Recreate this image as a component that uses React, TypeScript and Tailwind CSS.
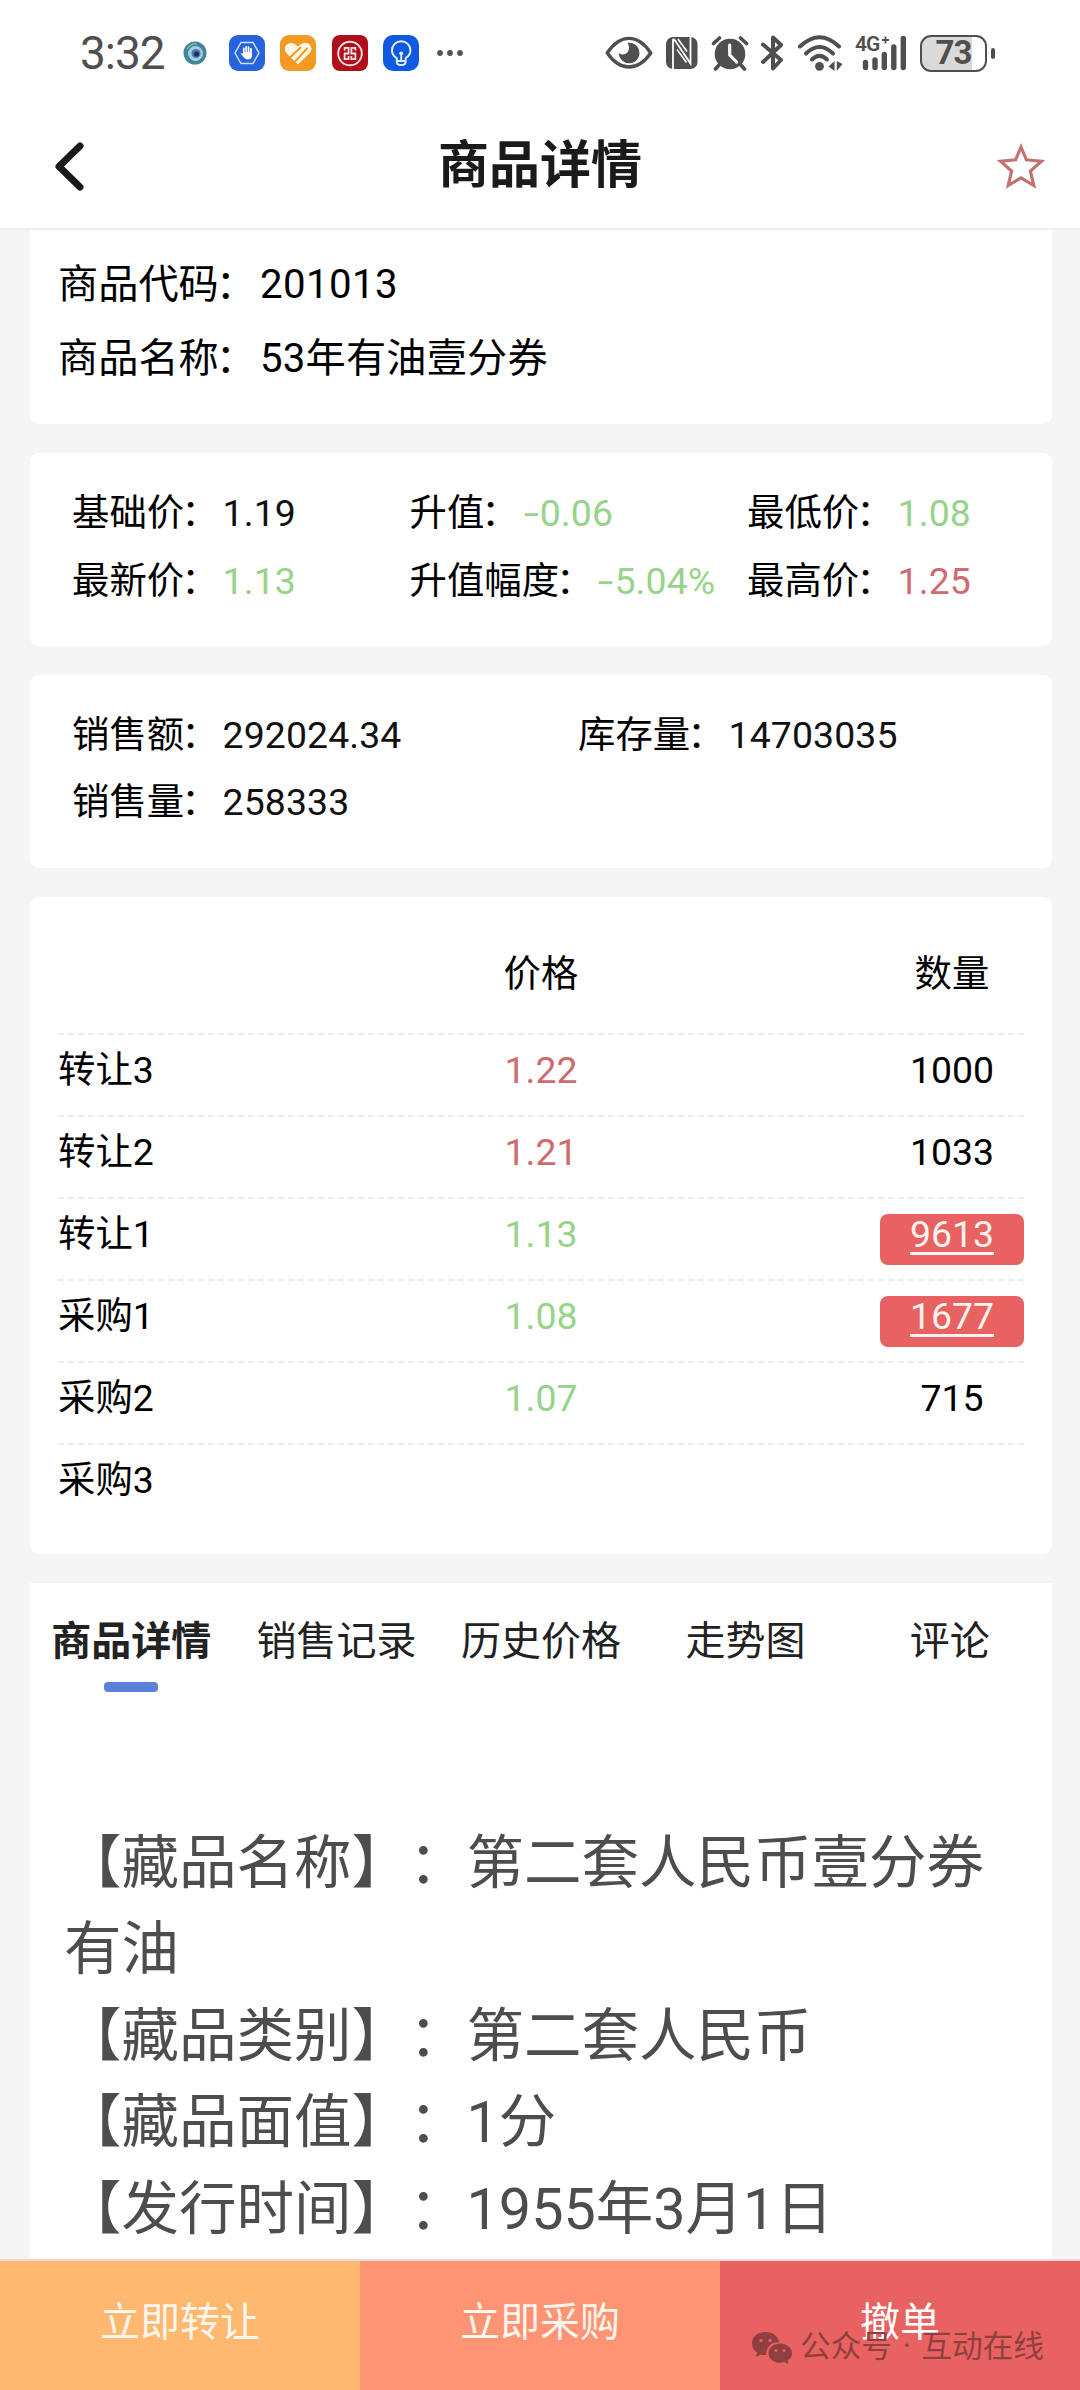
import React from 'react';
import clsx from 'clsx';

type Tone = 'up' | 'down' | 'plain';

const toneClass: Record<Tone, string> = {
  up: 'text-[#cf6b6f]',
  down: 'text-[#97d48a]',
  plain: 'text-[#111111]',
};

const prices: { label: string; value: string; tone: Tone }[] = [
  { label: '基础价', value: '1.19', tone: 'plain' },
  { label: '升值', value: '-0.06', tone: 'down' },
  { label: '最低价', value: '1.08', tone: 'down' },
  { label: '最新价', value: '1.13', tone: 'down' },
  { label: '升值幅度', value: '-5.04%', tone: 'down' },
  { label: '最高价', value: '1.25', tone: 'up' },
];

const sales = [
  { label: '销售额', value: '292024.34' },
  { label: '库存量', value: '14703035' },
  { label: '销售量', value: '258333' },
];

const orders: { name: string; price: string; tone: Tone; amount: string; mine?: boolean }[] = [
  { name: '转让3', price: '1.22', tone: 'up', amount: '1000' },
  { name: '转让2', price: '1.21', tone: 'up', amount: '1033' },
  { name: '转让1', price: '1.13', tone: 'down', amount: '9613', mine: true },
  { name: '采购1', price: '1.08', tone: 'down', amount: '1677', mine: true },
  { name: '采购2', price: '1.07', tone: 'down', amount: '715' },
  { name: '采购3', price: '', tone: 'plain', amount: '' },
];

const tabs = ['商品详情', '销售记录', '历史价格', '走势图', '评论'];

const details = [
  '【藏品名称】：第二套人民币壹分券有油',
  '【藏品类别】：第二套人民币',
  '【藏品面值】：1分',
  '【发行时间】：1955年3月1日',
];

const AppIcons: React.FC = () => (
  <div className="flex items-center">
    <svg className="ml-[19px] h-[24px] w-[24px]" viewBox="0 0 24 24">
      <circle cx="12" cy="12" r="11.5" fill="#3f8796" />
      <circle cx="12.5" cy="12.5" r="7.5" fill="#a9cbe6" />
      <circle cx="13" cy="12.5" r="4.6" fill="#4c78ae" />
      <circle cx="13.5" cy="13" r="2.6" fill="#1c3357" />
      <path d="M4 8 Q8 2 14 3" stroke="#8fb9ae" strokeWidth="1.2" fill="none" />
    </svg>
    <svg className="ml-[22px] h-[36px] w-[36px]" viewBox="0 0 36 36">
      <rect width="36" height="36" rx="9" fill="#2763dc" />
      <path d="M12 7.5H24L30 18L24 28.5H12L6 18Z" fill="none" stroke="#cfe3ff" strokeWidth="1.4" />
      <path
        d="M14.8 19V13.5M17.2 18V12M19.6 18V12.2M22 19V14"
        stroke="#fff"
        strokeWidth="1.8"
        strokeLinecap="round"
      />
      <path d="M14 17H23V21Q22.5 24.5 18.8 24.5Q16 24.5 14.2 21.8L11.8 18.5Q12 17.2 14 19Z" fill="#fff" />
    </svg>
    <svg className="ml-[15px] h-[36px] w-[36px]" viewBox="0 0 36 36">
      <rect width="36" height="36" rx="9" fill="#f49a24" />
      <path
        d="M18 29.5L6.5 18.2Q3 13.4 6.8 9.4Q11.6 5.6 18 11.4Q24.4 5.6 29.4 9.2Q33.4 13.4 29.6 18.2Z"
        fill="#fff7e6"
      />
      <path d="M20.5 12.5L10 22.5M27 13.5L15.2 26.4" stroke="#f49a24" strokeWidth="2" strokeLinecap="round" />
    </svg>
    <svg className="ml-[16px] h-[36px] w-[36px]" viewBox="0 0 36 36">
      <rect width="36" height="36" rx="8" fill="#b00e1c" />
      <circle cx="18" cy="18.5" r="11.8" fill="none" stroke="#fbe4e2" strokeWidth="1.9" />
      <path
        d="M11.8 12.8H16.6V18.5H11.8M12.6 18.5V24.2H16.6V21M24.2 12.8H19.4V18.5H24.2M23.4 18.5V24.2H19.4V21M12.6 15.6V12.8M23.4 15.6V12.8"
        fill="none"
        stroke="#fbe4e2"
        strokeWidth="1.8"
      />
    </svg>
    <svg className="ml-[15px] h-[36px] w-[36px]" viewBox="0 0 36 36">
      <rect width="36" height="36" rx="10" fill="#0f59e3" />
      <path
        d="M13.8 27V23.2Q9 20.2 9 15.4A9.2 9.2 0 0 1 27.4 15.4Q27.4 20.2 22.6 23.2V27Q22.6 30 18.2 30Q13.8 30 13.8 27ZM13.8 26H22.6"
        fill="none"
        stroke="#e3f1ff"
        strokeWidth="2"
      />
      <path d="M18.2 25V18.5" stroke="#e3f1ff" strokeWidth="1.8" />
      <circle cx="18.2" cy="18.3" r="1.9" fill="#e3f1ff" />
    </svg>
    <svg className="ml-[17px] h-[8px] w-[28px]" viewBox="0 0 28 8" fill="#555">
      <circle cx="4" cy="4" r="2.9" />
      <circle cx="14" cy="4" r="2.9" />
      <circle cx="24" cy="4" r="2.9" />
    </svg>
  </div>
);

const SystemIcons: React.FC = () => (
  <div className="flex items-center">
    <svg className="h-[34px] w-[48px]" viewBox="0 0 48 34">
      <path
        d="M2.2 17Q12 2.4 24 2.4T45.8 17Q36 31 24 31T2.2 17Z"
        fill="none"
        stroke="#4f4f4f"
        strokeWidth="3.4"
        strokeLinejoin="round"
      />
      <path d="M22.5 6.8A10.3 10.3 0 1 1 13.8 17Q18.5 20.3 22.4 16.6Q25.8 12 22.5 6.8Z" fill="#4f4f4f" />
    </svg>
    <svg className="ml-[12px] h-[34px] w-[34px]" viewBox="0 0 34 34">
      <rect x="1" y="1" width="31.5" height="32" rx="7" fill="#4f4f4f" />
      <path d="M8 33V4.5Q8 2 10 4.5L25.5 27.5V1" fill="none" stroke="#fff" strokeWidth="1.8" />
      <path d="M12 13.5L21.5 26.5M13 3L22 15.5" fill="none" stroke="#fff" strokeWidth="1.6" />
    </svg>
    <svg className="ml-[12px] h-[36px] w-[38px]" viewBox="0 0 38 36">
      <circle cx="19" cy="19" r="15.3" fill="#4f4f4f" />
      <path d="M2.5 8.5L8.5 3M35.5 8.5L29.5 3M8 30L4.5 34M30 30L33.5 34" stroke="#4f4f4f" strokeWidth="3.6" strokeLinecap="round" />
      <path d="M18.7 10V20L25.5 27" fill="none" stroke="#fff" strokeWidth="3.2" strokeLinecap="round" strokeLinejoin="round" />
    </svg>
    <svg className="ml-[12px] h-[36px] w-[24px]" viewBox="0 0 24 36">
      <path
        d="M2 9.5L20 25L12 33.5V2.5L20 10L2 27"
        fill="none"
        stroke="#4f4f4f"
        strokeWidth="4"
        strokeLinecap="round"
        strokeLinejoin="round"
      />
    </svg>
    <svg className="ml-[12px] h-[36px] w-[46px]" viewBox="0 0 46 36">
      <g fill="none" stroke="#4f4f4f" strokeWidth="4" strokeLinecap="round">
        <path d="M3 11.5Q22.5 -7 42 11.5" />
        <path d="M9 18.5Q22.5 5.5 36 18.5" />
        <path d="M15 24.5Q22.5 17.2 30 24.5" />
      </g>
      <circle cx="22.5" cy="31.3" r="4.4" fill="#4f4f4f" />
      <path d="M37.5 26V36L31.5 31.5ZM39.8 26V36L45.5 29Z" fill="#4f4f4f" />
    </svg>
    <div className="relative ml-[12px] h-[36px] w-[52px]">
      <span className="absolute -top-[1px] left-0 text-[21px] leading-[20px] font-semibold tracking-[-1px]">4G</span>
      <svg className="h-[36px] w-[52px]" viewBox="0 0 52 36">
        <path d="M30.5 1.5V8.5M27 5H34" stroke="#4f4f4f" strokeWidth="1.8" />
        <path d="M10.5 27.5V32.5M20 25V32.5M29.3 19.5V32.5M38.8 12V32.5M48.3 3.5V32.5" stroke="#4f4f4f" strokeWidth="5.4" strokeLinecap="round" />
      </svg>
    </div>
    <div className="ml-[13px] flex h-[37px] w-[67px] items-center justify-center rounded-[11px] border-[2.5px] border-[#4f4f4f] bg-linear-to-r from-[#dadada] from-80% to-white to-80%">
      <span className="text-[33px] leading-[32px] font-bold tracking-[-1px]">73</span>
    </div>
    <div className="ml-[4px] h-[11px] w-[4px] rounded-full bg-[#4f4f4f]" />
  </div>
);

const Card: React.FC<{ className?: string; children: React.ReactNode }> = ({ className, children }) => (
  <section className={clsx('mr-[28px] ml-[30px] bg-white', className)}>{children}</section>
);

// full-width colon, pulled a little towards its label
const Colon: React.FC = () => <span className="mr-[4px] -ml-[3px]">：</span>;

const Amount: React.FC<{ value: string; tone?: Tone }> = ({ value, tone = 'plain' }) => {
  const negative = value.startsWith('-');
  return (
    <span className={clsx('tracking-[0.1px]', toneClass[tone])}>
      {negative && <span className="inline-block w-[17px] scale-x-150 text-center">-</span>}
      {negative ? value.slice(1) : value}
    </span>
  );
};

const App: React.FC = () => {
  return (
    <div className="flex h-[2390px] w-[1080px] flex-col overflow-hidden bg-[#f5f5f5] font-[Roboto,'Noto_Sans_CJK_SC',sans-serif] text-black [text-spacing-trim:space-all]">
      <header className="h-[230px] shrink-0 border-b-2 border-[#eeeeee] bg-white">
        <div className="flex h-[106px] items-center justify-between pr-[85px] pl-[80px] text-[#4f4f4f]">
          <div className="flex items-center">
            <span className="w-[84px] text-[46px] leading-none tracking-[-1px]">3:32</span>
            <AppIcons />
          </div>
          <SystemIcons />
        </div>
        <div className="flex h-[120px] items-center justify-between pr-[35px] pl-[52px]">
          <svg className="h-[50px] w-[34px]" viewBox="0 0 34 50">
            <path d="M28 5L7 25.5L28 46" fill="none" stroke="#1a1a1a" strokeWidth="7" strokeLinecap="round" strokeLinejoin="round" />
          </svg>
          <h1 className="-ml-[3px] text-[51px] leading-[60px] font-bold text-[#1a1a1a]">商品详情</h1>
          <svg className="h-[46px] w-[48px]" viewBox="0 0 48 46">
            <path
              d="M24 4L29.4 16.8L44.5 18.2L33.4 28L36.8 42.5L24 34.8L11.2 42.5L14.6 28L3.5 18.2L18.6 16.8Z"
              fill="none"
              stroke="#c4726f"
              strokeWidth="3.2"
            />
          </svg>
        </div>
      </header>

      <main className="flex min-h-0 flex-1 flex-col gap-[29px] overflow-hidden">
        <Card className="h-[194px] shrink-0 rounded-b-[9px] px-[28px] pt-[18px] text-[40.2px] leading-[74px]">
          <p>
            商品代码
            <Colon />
            <span className="tracking-[0.4px]">201013</span>
          </p>
          <p>
            商品名称
            <Colon />
            <span className="tracking-[0.2px]">53年有油壹分券</span>
          </p>
        </Card>

        <Card className="h-[193px] shrink-0 rounded-[9px] px-[42px] pt-[26px] text-[37.4px] leading-[68px]">
          <div className="grid grid-cols-[337.5px_337.5px_1fr] whitespace-nowrap">
            {prices.map((item) => (
              <p key={item.label}>
                {item.label}
                <Colon />
                <Amount value={item.value} tone={item.tone} />
              </p>
            ))}
          </div>
        </Card>

        <Card className="h-[193px] shrink-0 rounded-[9px] px-[42px] pt-[27px] text-[37.4px] leading-[67px]">
          <div className="grid grid-cols-[506px_1fr]">
            {sales.map((item) => (
              <p key={item.label}>
                {item.label}
                <Colon />
                <Amount value={item.value} />
              </p>
            ))}
          </div>
        </Card>

        <Card className="h-[657px] shrink-0 rounded-[9px] px-[28px] text-[37.4px]">
          <div className="grid h-[136px] grid-cols-[411px_144px_411px] pt-[41px] leading-[72px]">
            <span className="col-start-2 text-center">价格</span>
            <span className="w-[144px] justify-self-end text-center">数量</span>
          </div>
          {orders.map((row) => (
            <div
              key={row.name}
              className="grid h-[82px] grid-cols-[411px_144px_411px] border-t-2 border-dashed border-[#ececec] leading-[70px]"
            >
              <span>{row.name}</span>
              <span className={clsx('text-center', toneClass[row.tone])}>{row.price}</span>
              <span
                className={clsx(
                  'w-[144px] justify-self-end text-center',
                  row.mine &&
                    'mt-[15px] h-[51px] rounded-[8px] bg-[#e96262] leading-[40px] text-[#fff3ee] underline decoration-[3px] underline-offset-[5px]',
                )}
              >
                {row.amount}
              </span>
            </div>
          ))}
        </Card>

        <Card className="flex-1">
          <nav className="grid grid-cols-5 pt-[29px] text-[40px] leading-[60px] text-[#222222]">
            {tabs.map((tab, i) => (
              <div key={tab} className="flex flex-col items-center">
                <span className={clsx('whitespace-nowrap', i === 0 && '-ml-[2px] font-bold')}>{tab}</span>
                {i === 0 && <i className="mt-[10px] -ml-[2px] h-[10px] w-[54px] rounded-[4px] bg-[#5a82dd]" />}
              </div>
            ))}
          </nav>
          <article className="mt-[129px] pr-[30px] pl-[34px] text-[57.5px] leading-[86.4px] text-[#4d4d4d]">
            {details.map((line) => (
              <p key={line}>{line}</p>
            ))}
          </article>
        </Card>
      </main>

      <footer className="relative grid h-[131px] shrink-0 grid-cols-3 border-t-2 border-[#efd9d0] text-center text-[40px] leading-[120px] text-[#fff6ee]">
        <button className="bg-[#ffb870] pb-[5px]">立即转让</button>
        <button className="bg-[#ff9474] pb-[5px]">立即采购</button>
        <button className="bg-[#e96262] pb-[5px] text-white">撤单</button>
        <div className="absolute top-[66px] left-[751px] flex items-center text-[30.7px] leading-[40px] whitespace-nowrap text-[#8f3f40] [word-spacing:3px]">
          <svg className="mt-[2px] mr-[7px] h-[34px] w-[42px]" viewBox="0 0 42 34">
            <path
              d="M14.5 1C6.5 1 1 6 1 12.5C1 16.3 3 19.5 6.2 21.6L5 26L10 23.4Q12.6 24.2 15.5 24A11 11 0 0 1 28 11.4C27 5 21.5 1 14.5 1Z"
              fill="#8f3f40"
            />
            <path
              d="M29 12.5C22.5 12.5 17.5 17 17.5 22.2C17.5 27.6 22.5 31.8 29 31.8Q31.4 31.8 33.5 31L37.5 33.2L36.5 29.5C39.3 27.8 41 25.2 41 22.2C41 17 35.5 12.5 29 12.5Z"
              fill="#8f3f40"
            />
            <g fill="#e96262">
              <circle cx="10" cy="9.5" r="1.7" />
              <circle cx="19" cy="9.5" r="1.7" />
              <circle cx="25" cy="19.5" r="1.5" />
              <circle cx="33" cy="19.5" r="1.5" />
            </g>
          </svg>
          公众号 · 互动在线
        </div>
      </footer>
    </div>
  );
};

export default App;
